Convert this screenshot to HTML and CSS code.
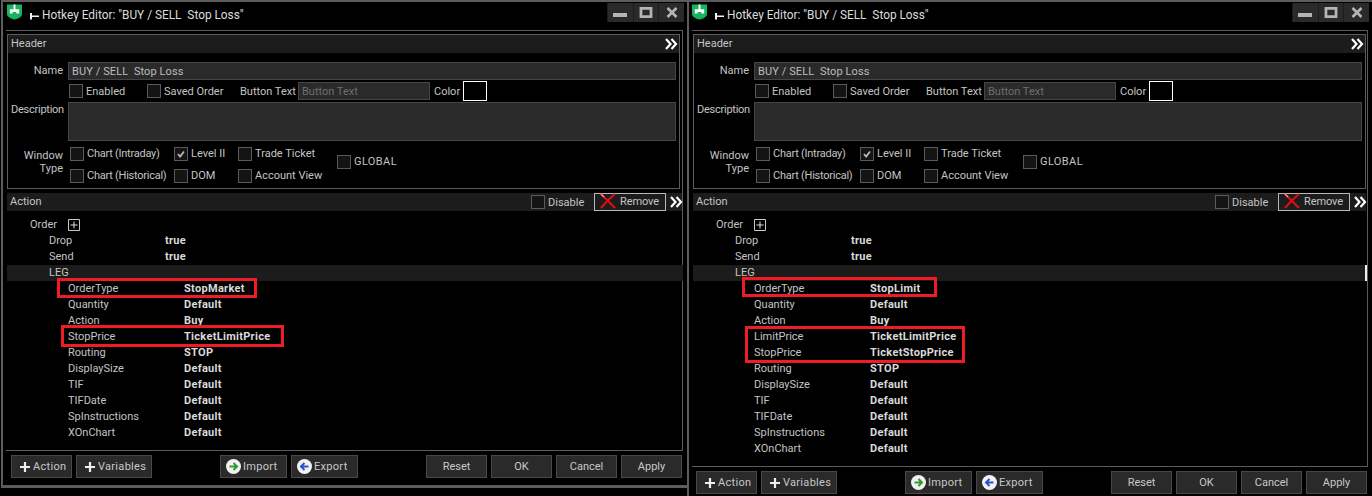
FILE: index.html
```html
<!DOCTYPE html>
<html lang="en">
<head>
<meta charset="utf-8">
<title>Hotkey Editor</title>
<link rel="stylesheet" href="styles.css">
</head>
<body>
<svg class="defs" aria-hidden="true">
  <symbol id="shield" viewBox="0 0 16 16"><path d="M0 0H16V10C16 13 12 15 8 16C4 15 0 13 0 10Z" fill="#17b45e"/><path d="M7 0H9V5H13V9.500H10V8H6V9.500H3V5H7Z" fill="#fff"/></symbol>
  <symbol id="pin" viewBox="0 0 9 7"><path d="M0 0H2V2.500H9V4H2V6.500H0Z" fill="#f2f2f2"/></symbol>
  <symbol id="chev" viewBox="0 0 13 12"><path d="M1 1L5.500 6L1 11M6.500 1L11 6L6.500 11" fill="none" stroke="#fff" stroke-width="2.200"/></symbol>
  <symbol id="redx" viewBox="0 0 16 16"><path d="M1 1C5 5 10 10 15 15M15 1C10 5 5 10 1 15" fill="none" stroke="#d80f0f" stroke-width="2.200"/><path d="M1 1L4 4" stroke="#f08a8a" stroke-width="1.500"/></symbol>
  <symbol id="plus" viewBox="0 0 10 10"><path d="M5 0V10M0 5H10" stroke="#eee" stroke-width="2.200"/></symbol>
  <symbol id="import" viewBox="0 0 15 15"><circle cx="7.500" cy="7.500" r="7.500" fill="#f2f2f2"/><path d="M3.500 7.500H10M7.500 4L11 7.500L7.500 11" fill="none" stroke="#2e9a2e" stroke-width="2"/></symbol>
  <symbol id="export" viewBox="0 0 15 15"><circle cx="7.500" cy="7.500" r="7.500" fill="#f2f2f2"/><path d="M11.500 7.500H5M7.500 4L4 7.500L7.500 11" fill="none" stroke="#2a55c8" stroke-width="2"/></symbol>
  <symbol id="tick" viewBox="0 0 14 14"><path d="M3.500 7L6 10L10.500 4" fill="none" stroke="#bdbdbd" stroke-width="2"/></symbol>
  <symbol id="expand" viewBox="0 0 12 12"><path d="M.5.500H11.500V11.500H.5Z" fill="none" stroke="#c8c8c8"/><path d="M6 2.500V9.500M2.500 6H9.500" stroke="#e0e0e0"/></symbol>
  <symbol id="winmin" viewBox="0 0 14 6"><path d="M0 1H14V5H0Z" fill="#b4b4b4"/></symbol>
  <symbol id="winmax" viewBox="0 0 14 12"><path d="M0 0H14V12H0ZM3 3V9H11V3Z" fill="#b4b4b4" fill-rule="evenodd"/></symbol>
  <symbol id="winx" viewBox="0 0 12 11"><path d="M1.500 1L10.500 10M10.500 1L1.500 10" stroke="#b4b4b4" stroke-width="2.600"/></symbol>
</svg>

<div class="desk">
  <section class="window window-first">
    <div class="titlebar">
      <svg class="ico-shield"><use href="#shield"/></svg>
      <svg class="ico-pin"><use href="#pin"/></svg>
      <span class="title">Hotkey Editor: "BUY / SELL  Stop Loss"</span>
      <div class="winbtns">
        <span class="winbtn"><svg class="ico-min"><use href="#winmin"/></svg></span>
        <span class="winbtn"><svg class="ico-max"><use href="#winmax"/></svg></span>
        <span class="winbtn"><svg class="ico-x"><use href="#winx"/></svg></span>
      </div>
    </div>
    <div class="panel">
      <div class="hbox">
        <div class="strip strip-header"><span>Header</span><svg class="ico-chev"><use href="#chev"/></svg></div>
        <div class="form">
          <div class="frow frow-name"><label class="lab">Name</label><div class="field field-name">BUY / SELL  Stop Loss</div></div>
          <div class="frow frow-opts">
            <span class="check check-enabled"><i class="box"></i><span class="txt">Enabled</span></span>
            <span class="check check-saved"><i class="box"></i><span class="txt">Saved Order</span></span>
            <span class="plain plain-bt">Button Text</span>
            <div class="field field-bt">Button Text</div>
            <span class="plain plain-color">Color</span>
            <i class="swatch"></i>
          </div>
          <div class="frow frow-desc"><label class="lab lab-desc">Description</label><div class="field field-desc"></div></div>
          <div class="frow frow-type">
            <label class="lab lab-type">Window<br>Type</label>
            <div class="types">
              <span class="check check-tight"><i class="box"></i><span class="txt">Chart (Intraday)</span></span>
              <span class="check"><i class="box"><svg class="ico-tick"><use href="#tick"/></svg></i><span class="txt">Level II</span></span>
              <span class="check"><i class="box"></i><span class="txt">Trade Ticket</span></span>
              <span class="check check-tight"><i class="box"></i><span class="txt">Chart (Historical)</span></span>
              <span class="check"><i class="box"></i><span class="txt">DOM</span></span>
              <span class="check"><i class="box"></i><span class="txt">Account View</span></span>
            </div>
            <span class="check check-global"><i class="box"></i><span class="txt">GLOBAL</span></span>
          </div>
        </div>
      </div>
      <div class="strip strip-action">
        <span>Action</span>
        <span class="check check-disable"><i class="box"></i><span class="txt">Disable</span></span>
        <span class="remove"><svg class="ico-redx"><use href="#redx"/></svg>Remove</span>
        <svg class="ico-chev"><use href="#chev"/></svg>
      </div>
      <div class="tree">
        <div class="row lv0"><span class="key">Order</span><svg class="ico-expand"><use href="#expand"/></svg></div>
        <div class="row lv1"><span class="key">Drop</span><b class="val">true</b></div>
        <div class="row lv1"><span class="key">Send</span><b class="val">true</b></div>
        <div class="row lv1 row-leg"><span class="key">LEG</span></div>
        <div class="row lv2"><span class="key">OrderType</span><b class="val">StopMarket</b></div>
        <div class="row lv2"><span class="key">Quantity</span><b class="val">Default</b></div>
        <div class="row lv2"><span class="key">Action</span><b class="val">Buy</b></div>
        <div class="row lv2"><span class="key">StopPrice</span><b class="val">TicketLimitPrice</b></div>
        <div class="row lv2"><span class="key">Routing</span><b class="val">STOP</b></div>
        <div class="row lv2"><span class="key">DisplaySize</span><b class="val">Default</b></div>
        <div class="row lv2"><span class="key">TIF</span><b class="val">Default</b></div>
        <div class="row lv2"><span class="key">TIFDate</span><b class="val">Default</b></div>
        <div class="row lv2"><span class="key">SpInstructions</span><b class="val">Default</b></div>
        <div class="row lv2"><span class="key">XOnChart</span><b class="val">Default</b></div>
        <i class="mark mark-a1"></i>
        <i class="mark mark-a2"></i>
      </div>
    </div>
    <div class="footer">
      <div class="btns">
        <span class="btn btn-action"><svg class="ico-plus"><use href="#plus"/></svg>Action</span>
        <span class="btn btn-vars"><svg class="ico-plus"><use href="#plus"/></svg>Variables</span>
      </div>
      <div class="btns">
        <span class="btn btn-io"><svg class="ico-io"><use href="#import"/></svg>Import</span>
        <span class="btn btn-io"><svg class="ico-io"><use href="#export"/></svg>Export</span>
      </div>
      <div class="btns">
        <span class="btn btn-std">Reset</span>
        <span class="btn btn-std">OK</span>
        <span class="btn btn-std">Cancel</span>
        <span class="btn btn-std">Apply</span>
      </div>
    </div>
  </section>

  <section class="window window-second">
    <div class="titlebar">
      <svg class="ico-shield"><use href="#shield"/></svg>
      <svg class="ico-pin"><use href="#pin"/></svg>
      <span class="title">Hotkey Editor: "BUY / SELL  Stop Loss"</span>
      <div class="winbtns">
        <span class="winbtn"><svg class="ico-min"><use href="#winmin"/></svg></span>
        <span class="winbtn"><svg class="ico-max"><use href="#winmax"/></svg></span>
        <span class="winbtn"><svg class="ico-x"><use href="#winx"/></svg></span>
      </div>
    </div>
    <div class="panel">
      <div class="hbox">
        <div class="strip strip-header"><span>Header</span><svg class="ico-chev"><use href="#chev"/></svg></div>
        <div class="form">
          <div class="frow frow-name"><label class="lab">Name</label><div class="field field-name">BUY / SELL  Stop Loss</div></div>
          <div class="frow frow-opts">
            <span class="check check-enabled"><i class="box"></i><span class="txt">Enabled</span></span>
            <span class="check check-saved"><i class="box"></i><span class="txt">Saved Order</span></span>
            <span class="plain plain-bt">Button Text</span>
            <div class="field field-bt">Button Text</div>
            <span class="plain plain-color">Color</span>
            <i class="swatch"></i>
          </div>
          <div class="frow frow-desc"><label class="lab lab-desc">Description</label><div class="field field-desc"></div></div>
          <div class="frow frow-type">
            <label class="lab lab-type">Window<br>Type</label>
            <div class="types">
              <span class="check check-tight"><i class="box"></i><span class="txt">Chart (Intraday)</span></span>
              <span class="check"><i class="box"><svg class="ico-tick"><use href="#tick"/></svg></i><span class="txt">Level II</span></span>
              <span class="check"><i class="box"></i><span class="txt">Trade Ticket</span></span>
              <span class="check check-tight"><i class="box"></i><span class="txt">Chart (Historical)</span></span>
              <span class="check"><i class="box"></i><span class="txt">DOM</span></span>
              <span class="check"><i class="box"></i><span class="txt">Account View</span></span>
            </div>
            <span class="check check-global"><i class="box"></i><span class="txt">GLOBAL</span></span>
          </div>
        </div>
      </div>
      <div class="strip strip-action">
        <span>Action</span>
        <span class="check check-disable"><i class="box"></i><span class="txt">Disable</span></span>
        <span class="remove"><svg class="ico-redx"><use href="#redx"/></svg>Remove</span>
        <svg class="ico-chev"><use href="#chev"/></svg>
      </div>
      <div class="tree">
        <div class="row lv0"><span class="key">Order</span><svg class="ico-expand"><use href="#expand"/></svg></div>
        <div class="row lv1"><span class="key">Drop</span><b class="val">true</b></div>
        <div class="row lv1"><span class="key">Send</span><b class="val">true</b></div>
        <div class="row lv1 row-leg row-leg-tick"><span class="key">LEG</span></div>
        <div class="row lv2"><span class="key">OrderType</span><b class="val">StopLimit</b></div>
        <div class="row lv2"><span class="key">Quantity</span><b class="val">Default</b></div>
        <div class="row lv2"><span class="key">Action</span><b class="val">Buy</b></div>
        <div class="row lv2"><span class="key">LimitPrice</span><b class="val">TicketLimitPrice</b></div>
        <div class="row lv2"><span class="key">StopPrice</span><b class="val">TicketStopPrice</b></div>
        <div class="row lv2"><span class="key">Routing</span><b class="val">STOP</b></div>
        <div class="row lv2"><span class="key">DisplaySize</span><b class="val">Default</b></div>
        <div class="row lv2"><span class="key">TIF</span><b class="val">Default</b></div>
        <div class="row lv2"><span class="key">TIFDate</span><b class="val">Default</b></div>
        <div class="row lv2"><span class="key">SpInstructions</span><b class="val">Default</b></div>
        <div class="row lv2"><span class="key">XOnChart</span><b class="val">Default</b></div>
        <i class="mark mark-b1"></i>
        <i class="mark mark-b2"></i>
      </div>
    </div>
    <div class="footer">
      <div class="btns">
        <span class="btn btn-action"><svg class="ico-plus"><use href="#plus"/></svg>Action</span>
        <span class="btn btn-vars"><svg class="ico-plus"><use href="#plus"/></svg>Variables</span>
      </div>
      <div class="btns">
        <span class="btn btn-io"><svg class="ico-io"><use href="#import"/></svg>Import</span>
        <span class="btn btn-io"><svg class="ico-io"><use href="#export"/></svg>Export</span>
      </div>
      <div class="btns">
        <span class="btn btn-std">Reset</span>
        <span class="btn btn-std">OK</span>
        <span class="btn btn-std">Cancel</span>
        <span class="btn btn-std">Apply</span>
      </div>
    </div>
  </section>
</div>
</body>
</html>
```

FILE: styles.css
```css
* { box-sizing: border-box; }
html, body { margin: 0; height: 100%; background: #000; overflow: hidden; }
body { font: 11px/14px Roboto, "Liberation Sans", sans-serif; color: #c4c4c4; }
.defs { position: absolute; width: 0; height: 0; }
svg { display: block; flex: none; }

.desk { display: flex; align-items: flex-start; height: 496px; }

.window { flex: none; display: flex; flex-direction: column; border-top: 2px solid #5c5c5c; border-left: 2px solid #5c5c5c; }
.window-first { width: 686px; height: 488px; margin-left: 1px; padding-left: 3px; border-bottom: 3px solid #5c5c5c; }
.window-second { width: 685px; height: 496px; padding-left: 3px; }

.titlebar { height: 28px; flex: none; display: flex; align-items: flex-start; }
.window-second .titlebar { margin-left: -1px; }
.ico-shield { width: 15px; height: 16px; margin: 2px 0 0 1px; }
.window-second .ico-shield { margin-left: 1px; }
.ico-pin { width: 9px; height: 7px; margin: 11px 0 0 8px; }
.title { margin: 3px 0 0 3px; font-size: 11.850px; line-height: 20px; color: #dcdcdc; white-space: pre; }
.winbtns { margin: 1px 3px 0 auto; display: flex; width: 77px; height: 19px; background: #2a2a2a; }
.winbtn { flex: 1; display: flex; align-items: center; justify-content: center; border-left: 1px solid #1c1c1c; }
.ico-min { width: 14px; height: 6px; margin-top: 5px; }
.ico-max { width: 14px; height: 11px; }
.ico-x { width: 12px; height: 11px; }

.panel { width: 677px; flex: none; border-top: 1px solid #5c5c5c; border-right: 1px solid #5c5c5c; border-bottom: 1px solid #5c5c5c; padding: 3px 0 9px 1px; }
.window-second .panel { width: 676px; }

.hbox { width: 673px; height: 155px; border: 1px solid #5c5c5c; }
.strip { display: flex; align-items: center; background: #1c1c1c; }
.strip-header { height: 18px; padding: 0 1px 0 3px; justify-content: space-between; }
.ico-chev { width: 13px; height: 12px; }

.form { padding: 9px 3px 0 0; }
.frow { display: flex; }
.lab { width: 55px; text-align: right; flex: none; }
.field { background: #2a2a2a; border: 1px solid #464646; }
.frow-name { height: 18px; align-items: center; }
.field-name { margin-left: 5px; flex: 1; height: 18px; line-height: 17px; padding-left: 3px; white-space: pre; color: #bdbdbd; letter-spacing: .1px; }

.frow-opts { height: 20px; margin-top: 1px; align-items: center; padding-left: 61px; }
.check { display: flex; align-items: center; white-space: nowrap; }
.txt { position: relative; top: 1px; }
.check-tight .txt { letter-spacing: -.25px; }
.box { width: 14px; height: 14px; flex: none; margin-right: 3px; border: 1px solid #5a5a5a; background: #141414; display: block; }
.ico-tick { width: 12px; height: 12px; }
.check-enabled { width: 78px; }
.check-saved { width: 93px; }
.plain { flex: none; }
.plain-bt { width: 58px; position: relative; top: 1px; }
.field-bt { width: 132px; height: 18px; line-height: 17px; padding-left: 3px; color: #6e6e6e; }
.plain-color { margin-left: 4px; width: 29px; position: relative; top: 1px; }
.swatch { display: block; width: 24px; height: 20px; border: 1px solid #fff; background: #000; }

.frow-desc { margin-top: 1px; height: 39px; }
.lab-desc { width: 60px; text-align: left; padding-left: 3px; white-space: nowrap; margin-top: 1px; letter-spacing: -.25px; }
.field-desc { flex: 1; }

.frow-type { margin-top: 4px; height: 40px; }
.lab-type { margin-top: 4px; line-height: 13px; }
.types { margin: -2px 0 0 7px; display: grid; grid-template-columns: 104px 64px 99px; grid-auto-rows: 22px; }
.types .txt { top: 0; }
.check-global { height: 34px; }
.check-global .txt { letter-spacing: .4px; top: 0; }

.strip-action { width: 675px; height: 18px; margin-top: 4px; padding-left: 3px; }
.window-second .strip-action { width: 673px; }
.check-disable { margin-left: auto; width: 63px; }
.remove { width: 72px; height: 18px; border: 1px solid #b8b8b8; display: flex; align-items: center; padding-left: 5px; gap: 4px; letter-spacing: -.1px; }
.ico-redx { width: 16px; height: 16px; margin-top: -3px; }
.strip-action .ico-chev { margin: 0 -1px 0 4px; }

.tree { position: relative; margin: 6px 0 0 0; }
.row { height: 16px; display: flex; align-items: center; white-space: nowrap; }
.key { width: 116px; flex: none; }
.val { color: #dadada; font-weight: 700; letter-spacing: .3px; }
.lv0 { padding-left: 23px; }
.lv0 .key { width: 38px; }
.lv1 { padding-left: 42px; }
.lv2 { padding-left: 61px; }
.row-leg { width: 676px; background: #1c1c1c; }
.row-leg-tick { border-right: 2px solid #f0f0f0; width: 674px; }
.ico-expand { width: 12px; height: 12px; }

.mark { position: absolute; display: block; border: 3px solid #ee1c25; }
.mark-a1 { left: 50px; top: 61px; width: 200px; height: 20px; }
.mark-a2 { left: 54px; top: 108px; width: 223px; height: 22px; }
.mark-b1 { left: 49px; top: 60px; width: 195px; height: 20px; }
.mark-b2 { left: 52px; top: 109px; width: 220px; height: 37px; }

.footer { flex: none; display: flex; justify-content: space-between; width: 671px; margin: 4px 0 0 5px; }
.window-second .footer { margin-left: 4px; }
.btns { display: flex; gap: 4px; }
.btn { height: 23px; background: #2a2a2a; border: 1px solid #484848; display: flex; align-items: center; gap: 3px; color: #c8c8c8; letter-spacing: .3px; }
.btn-action { width: 61px; padding-left: 8px; }
.btn-vars { width: 76px; padding-left: 8px; }
.btn-io { width: 67px; padding-left: 5px; gap: 2px; }
.btn-std { width: 61px; letter-spacing: 0; justify-content: center; line-height: 16px; padding-top: 1px; }
.ico-plus { width: 10px; height: 10px; }
.ico-io { width: 15px; height: 15px; }
```
